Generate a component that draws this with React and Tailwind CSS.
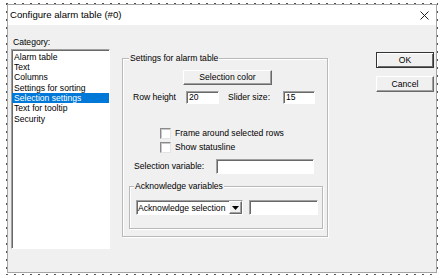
import React from "react";

const sunken =
  "bg-white border border-t-[#a0a0a0] border-l-[#a0a0a0] border-b-white border-r-white shadow-[inset_1px_1px_0_#696969]";
const raised =
  "bg-[#f0f0f0] border border-t-white border-l-white border-b-[#696969] border-r-[#696969] shadow-[inset_-1px_-1px_0_#a0a0a0]";

function Check({ label }) {
  return (
    <div className="flex items-center h-[11px]">
      <div className="w-[11px] h-[11px] bg-white border border-t-[#8a8a8a] border-l-[#8a8a8a] border-b-[#e3e3e3] border-r-[#e3e3e3] shadow-[inset_1px_1px_0_#c8c8c8]" />
      <span className="ml-[4px] leading-[11px]">{label}</span>
    </div>
  );
}

export default function App() {
  const items = [
    "Alarm table",
    "Text",
    "Columns",
    "Settings for sorting",
    "Selection settings",
    "Text for tooltip",
    "Security",
  ];
  return (
    <div className="w-[445px] h-[278px] bg-white relative overflow-hidden font-['Liberation_Sans',Arial,sans-serif] text-[8.6px] text-black">
      {/* dotted design frame */}
      <div className="absolute left-[6px] top-[3px] w-[432px] h-[1px] bg-[repeating-linear-gradient(90deg,#555_0_2px,transparent_2px_8px)]" />
      <div className="absolute left-[6px] top-[274px] w-[432px] h-[1px] bg-[repeating-linear-gradient(90deg,#555_0_2px,transparent_2px_8px)]" />
      <div className="absolute left-[6px] top-[3px] w-[1px] h-[272px] bg-[repeating-linear-gradient(180deg,#555_0_2px,transparent_2px_8px)]" />
      <div className="absolute left-[437px] top-[3px] w-[1px] h-[272px] bg-[repeating-linear-gradient(180deg,#555_0_2px,transparent_2px_8px)]" />

      <div className="pl-[7px] pt-[4px]">
        <div className="w-[430px] h-[269px] border border-[#a5a5a5] flex flex-col">
          {/* title bar */}
          <div className="h-[20px] bg-white flex items-center justify-between pl-[2px] pr-[6px]">
            <span className="text-[9.6px] text-black">Configure alarm table (#0)</span>
            <svg width="9" height="9" viewBox="0 0 9 9" className="mr-[1px]">
              <path d="M0.5 0.5 L8.5 8.5 M8.5 0.5 L0.5 8.5" stroke="#222" strokeWidth="1" />
            </svg>
          </div>
          {/* body */}
          <div className="flex-1 bg-[#f0f0f0] flex">
            {/* left column */}
            <div className="ml-[3px] pt-[12px] flex flex-col">
              <div className="h-[10px] leading-[10px] pl-[2px]">Category:</div>
              <div className={`mt-[2px] w-[99px] h-[200px] ${sunken} pt-[1.5px]`}>
                {items.map((it, i) => (
                  <div
                    key={it}
                    className={
                      i === 4
                        ? "h-[10.4px] leading-[10.4px] pl-[2px] bg-[#0078d7] text-white"
                        : "h-[10.4px] leading-[10.4px] pl-[2px]"
                    }
                  >
                    {it}
                  </div>
                ))}
              </div>
            </div>

            {/* group box */}
            <div className="ml-[12px] mt-[33px] w-[206px] h-[179px] relative border border-[#b9b9b9] shadow-[inset_1px_1px_0_#fff,1px_1px_0_#fff] flex flex-col">
              <span className="absolute -top-[6px] left-[6px] bg-[#f0f0f0] px-[1px] leading-[10px]">
                Settings for alarm table
              </span>
              <div className={`mt-[11px] ml-[60px] w-[89px] h-[15px] ${raised} flex items-center justify-center`}>
                Selection color
              </div>
              <div className="mt-[6px] flex items-center h-[13px]">
                <span className="ml-[10px] w-[53px]">Row height</span>
                <div className={`w-[33px] h-[13px] ${sunken} pl-[2px] leading-[11px]`}>20</div>
                <span className="ml-[9px] w-[55px]">Slider size:</span>
                <div className={`w-[32px] h-[13px] ${sunken} pl-[2px] leading-[11px]`}>15</div>
              </div>
              <div className="mt-[24px] ml-[37px] flex flex-col gap-[3px]">
                <Check label="Frame around selected rows" />
                <Check label="Show statusline" />
              </div>
              <div className="mt-[6px] flex items-center h-[15px]">
                <span className="ml-[11px] w-[82px]">Selection variable:</span>
                <div className={`w-[98px] h-[15px] ${sunken}`} />
              </div>
              {/* inner group */}
              <div className="mt-[12px] ml-[6px] w-[194px] h-[43px] relative border border-[#b9b9b9] shadow-[inset_1px_1px_0_#fff,1px_1px_0_#fff] flex items-start">
                <span className="absolute -top-[6px] left-[4px] bg-[#f0f0f0] px-[1px] leading-[10px]">
                  Acknowledge variables
                </span>
                <div className={`mt-[13px] ml-[6px] w-[107px] h-[15px] ${sunken} flex items-center`}>
                  <span className="flex-1 pl-[1px] leading-[12px] overflow-hidden whitespace-nowrap">Acknowledge selection</span>
                  <div className={`w-[13px] h-[13px] ${raised} flex items-center justify-center`}>
                    <svg width="7" height="4" viewBox="0 0 7 4">
                      <path d="M0 0 H7 L3.5 4 Z" fill="#000" />
                    </svg>
                  </div>
                </div>
                <div className={`mt-[13px] ml-[6px] w-[69px] h-[15px] ${sunken}`} />
              </div>
            </div>

            {/* buttons */}
            <div className="ml-[48px] mt-[27px] flex flex-col gap-[8px]">
              <div className="w-[58px] h-[16px] border border-[#333] bg-[#f0f0f0] shadow-[inset_1px_1px_0_#fff,inset_-1px_-1px_0_#696969] flex items-center justify-center">
                OK
              </div>
              <div className={`w-[58px] h-[16px] ${raised} flex items-center justify-center`}>
                Cancel
              </div>
            </div>
          </div>
        </div>
      </div>
    </div>
  );
}
